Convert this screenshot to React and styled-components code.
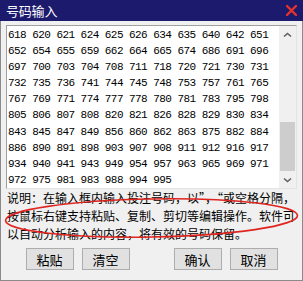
import React from 'react';
import styled, { createGlobalStyle } from 'styled-components';

const GlobalStyle = createGlobalStyle`
  html, body {
    margin: 0;
    padding: 0;
    background: #f0f0f0;
  }
`;

const Window = styled.div`
  width: 303px;
  height: 281px;
  box-sizing: border-box;
  background: #f0f0f0;
  border: 1px solid #8a8a8a;
  border-top: none;
  display: flex;
  flex-direction: column;
  font-family: "Noto Sans CJK SC", sans-serif;
`;

const TitleBar = styled.div`
  height: 21px;
  margin: 0 -1px;
  background: #1c1a6d;
  display: flex;
  align-items: center;
  justify-content: space-between;
  padding: 0 6px 0 6px;
`;

const Title = styled.span`
  color: #ffffff;
  font-size: 13px;
  line-height: 21px;
  letter-spacing: -0.2px;
`;

const Body = styled.div`
  padding: 4px 5px 0 5px;
  display: flex;
  flex-direction: column;
`;

const TextBox = styled.div`
  height: 164px;
  box-sizing: border-box;
  background: #ffffff;
  border: 1px solid #a0a0a0;
  border-right-color: #e3e3e3;
  border-bottom-color: #e3e3e3;
  display: flex;
`;

const Numbers = styled.div`
  flex: 1;
  padding: 1px 0 0 1px;
  font-family: "Liberation Mono", monospace;
  font-size: 11px;
  letter-spacing: -0.55px;
  line-height: 16.1px;
  color: #000;
`;

const ScrollBar = styled.div`
  width: 17px;
  background: #f0f0f0;
  display: flex;
  flex-direction: column;
`;

const ArrowButton = styled.div`
  height: 17px;
  display: flex;
  align-items: center;
  justify-content: center;
`;

const Track = styled.div`
  flex: 1;
  display: flex;
  flex-direction: column;
`;

const Thumb = styled.div`
  margin: ${p => p.$top}px 1px 0 1px;
  height: ${p => p.$size}px;
  background: #cdcdcd;
`;

const Note = styled.div`
  position: relative;
  padding-left: 1px;
  font-size: 12px;
  line-height: 18px;
  color: #000;
`;

const Mark = styled.svg`
  position: absolute;
  left: 0;
  top: 0;
  overflow: visible;
  pointer-events: none;
`;

const ButtonRow = styled.div`
  margin-top: 5px;
  display: flex;
  justify-content: center;
  gap: 8px;
`;

const Spacer = styled.div`
  width: 28px;
`;

const Button = styled.button`
  width: 48px;
  height: 22px;
  padding: 0;
  background: #e1e1e1;
  border: 1px solid #adadad;
  font-family: "Noto Sans CJK SC", sans-serif;
  font-size: 13px;
  color: #000;
`;

const rows = [
  '618 620 621 624 625 626 634 635 640 642 651',
  '652 654 655 659 662 664 665 674 686 691 696',
  '697 700 703 704 708 711 718 720 721 730 731',
  '732 735 736 741 744 745 748 753 757 761 765',
  '767 769 771 774 777 778 780 781 783 795 798',
  '805 806 807 808 820 821 826 828 829 830 834',
  '843 845 847 849 856 860 862 863 875 882 884',
  '886 890 891 898 903 907 908 911 912 916 917',
  '934 940 941 943 949 954 957 963 965 969 971',
  '972 975 981 983 988 994 995',
];

const Chevron = ({ down }) => (
  <svg width="9" height="6" viewBox="0 0 9 6">
    <path
      d={down ? 'M1 1.5 L4.5 4.5 L8 1.5' : 'M1 4.5 L4.5 1.5 L8 4.5'}
      fill="none"
      stroke="#606060"
      strokeWidth="1.6"
    />
  </svg>
);

const CloseIcon = () => (
  <svg width="11" height="11" viewBox="0 0 11 11">
    <path d="M1 1 L10 10 M10 1 L1 10" stroke="#e8322b" strokeWidth="2.4" strokeLinecap="round" />
  </svg>
);

const App = () => {
  return (
    <>
      <GlobalStyle />
      <Window>
        <TitleBar>
          <Title>号码输入</Title>
          <CloseIcon />
        </TitleBar>
        <Body>
          <TextBox>
            <Numbers>{rows.join(' ')}</Numbers>
            <ScrollBar>
              <ArrowButton><Chevron /></ArrowButton>
              <Track>
                <Thumb $top={79} $size={49} />
              </Track>
              <ArrowButton><Chevron down /></ArrowButton>
            </ScrollBar>
          </TextBox>
          <Note>
            说明：在输入框内输入投注号码，以”，“或空格分隔，按鼠标右键支持粘贴、复制、剪切等编辑操作。软件可以自动分析输入的内容，将有效的号码保留。
            <Mark width="291" height="54">
              <ellipse
                cx="145.5"
                cy="29"
                rx="146"
                ry="19"
                transform="rotate(-1 145.5 29)"
                fill="none"
                stroke="#e0241f"
                strokeWidth="1.6"
              />
            </Mark>
          </Note>
          <ButtonRow>
            <Button>粘贴</Button>
            <Button>清空</Button>
            <Spacer />
            <Button>确认</Button>
            <Button>取消</Button>
          </ButtonRow>
        </Body>
      </Window>
    </>
  );
};

export default App;
